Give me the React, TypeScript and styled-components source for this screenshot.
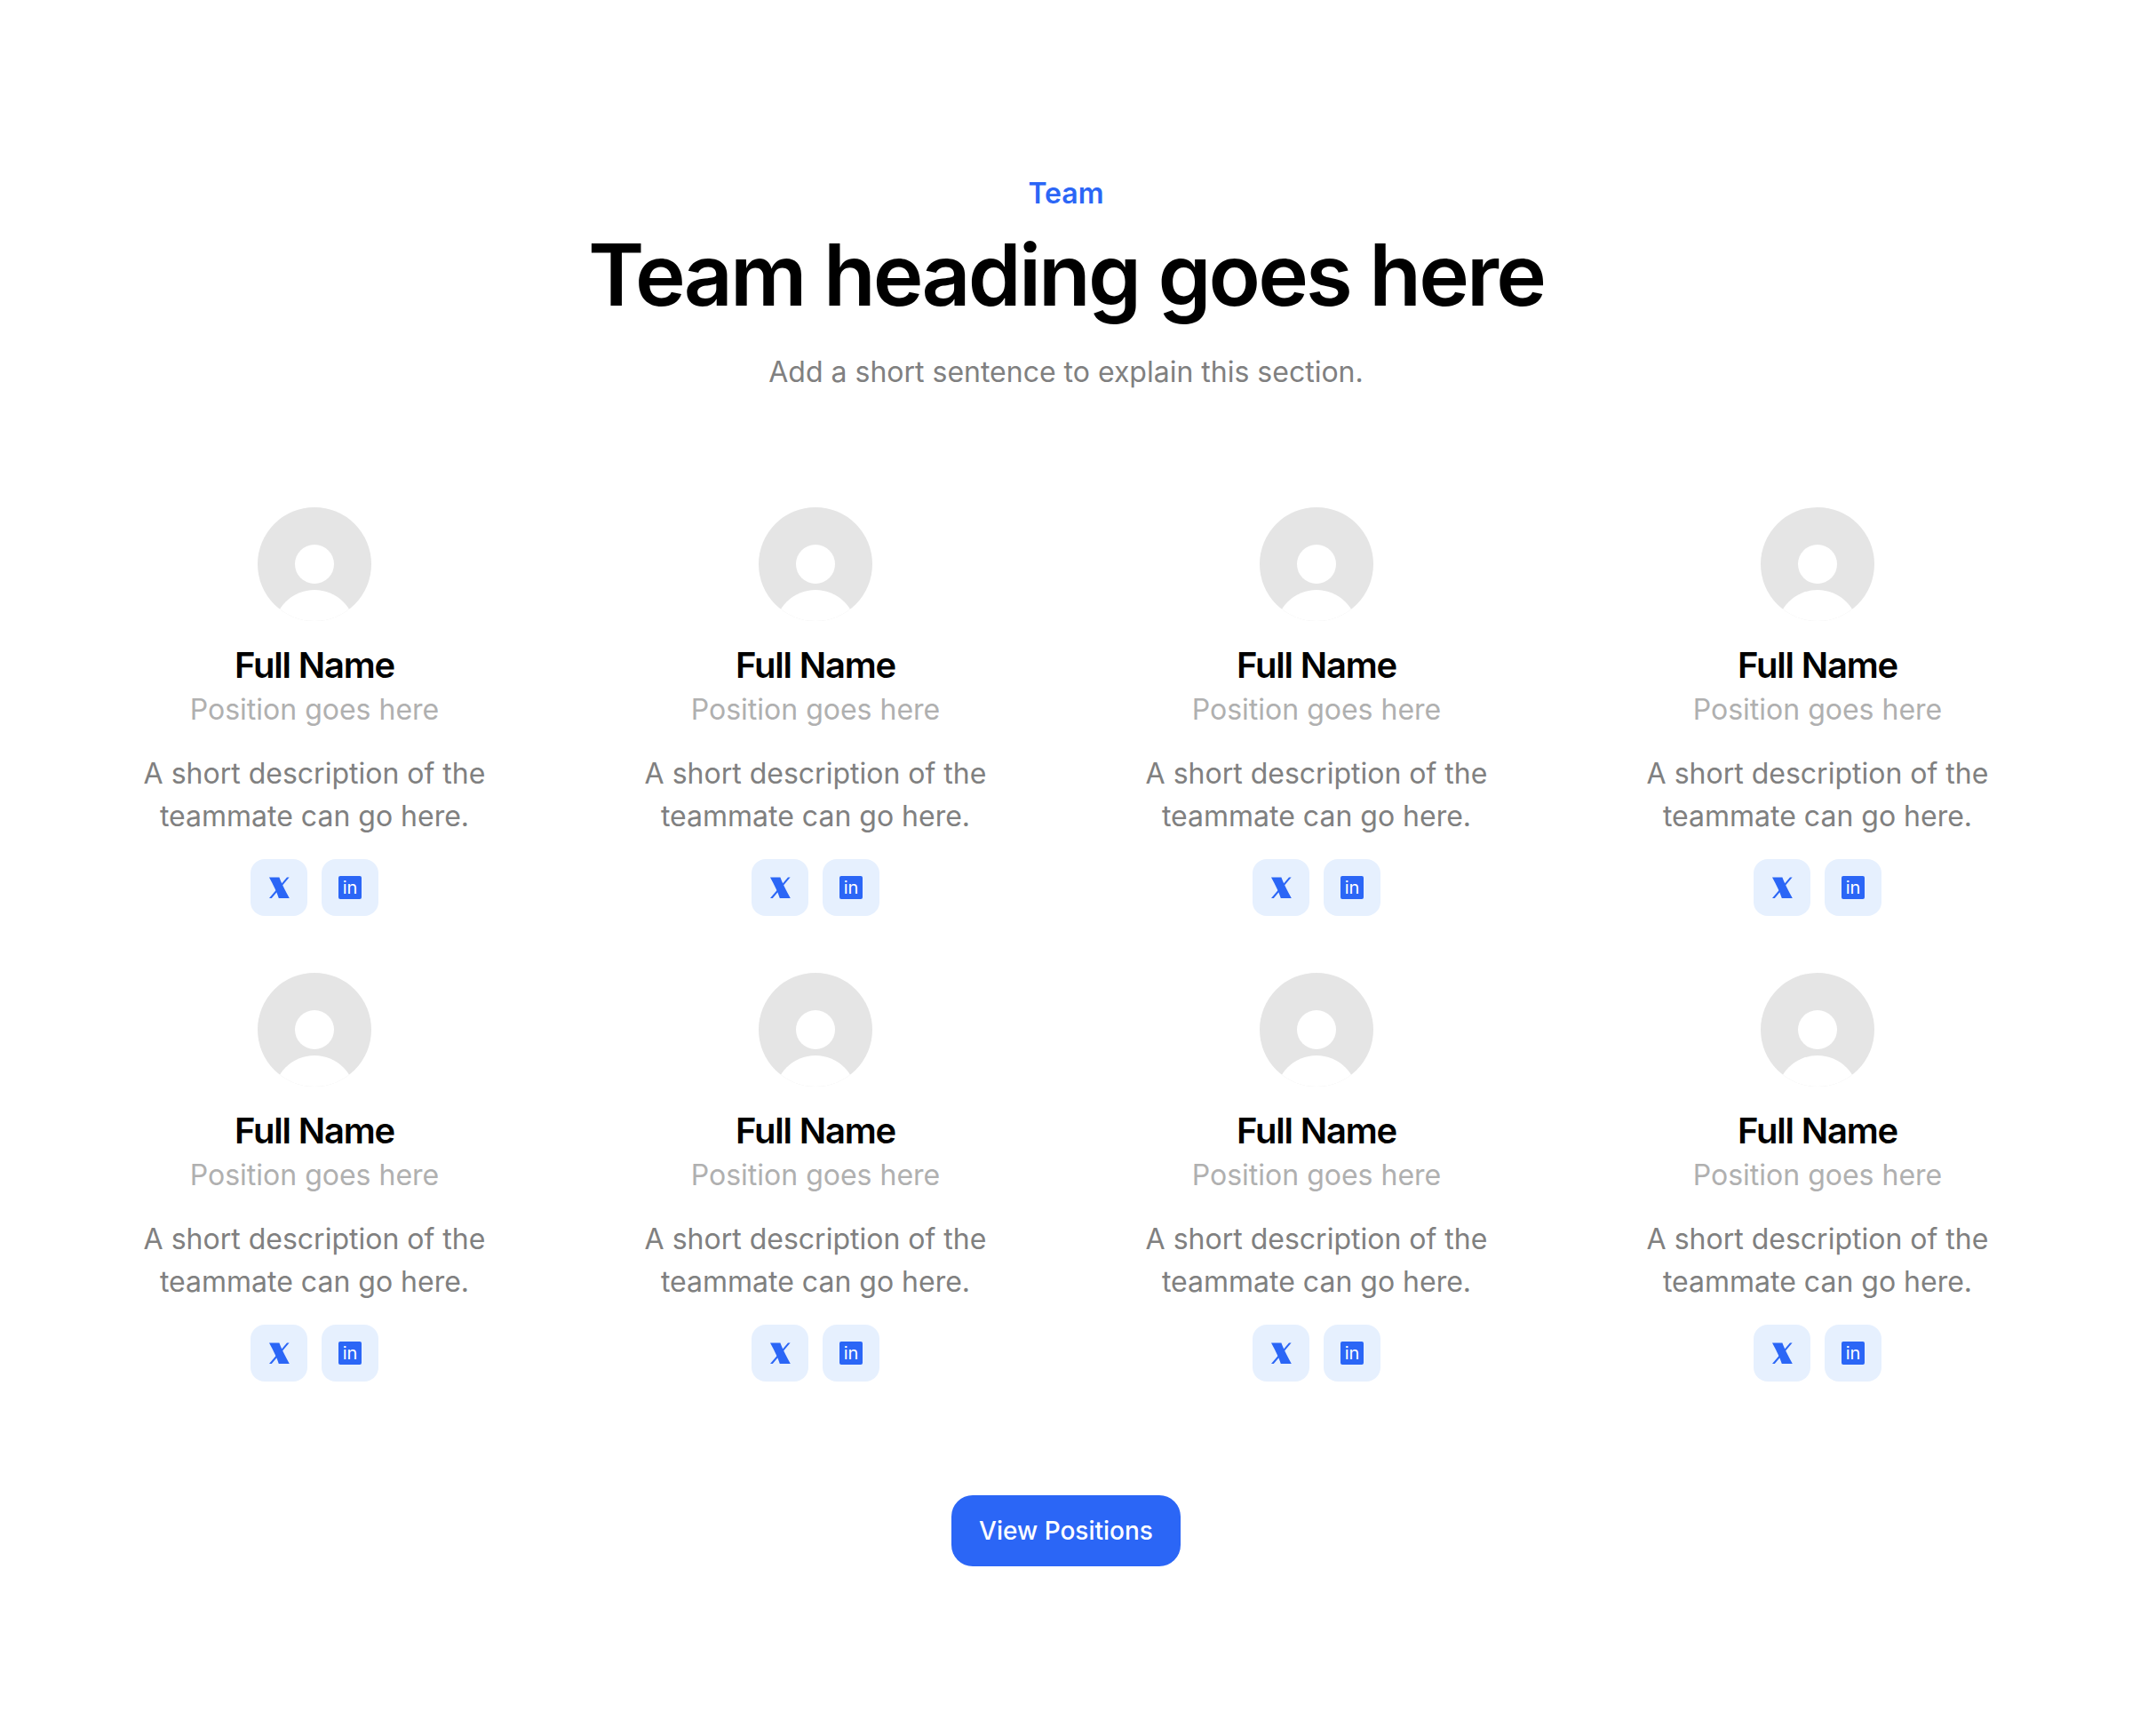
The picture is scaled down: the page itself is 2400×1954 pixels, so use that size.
import styled, { createGlobalStyle } from 'styled-components';

const GlobalStyle = createGlobalStyle`
  * {
    box-sizing: border-box;
  }

  body {
    margin: 0;
    background-color: #ffffff;
    font-family: Inter, "Liberation Sans", sans-serif;
  }
`;

const Section = styled.section`
  display: flex;
  flex-direction: column;
  align-items: center;
  min-height: 1954px;
  padding: 194px 96px 0;
`;

const Header = styled.header`
  display: flex;
  flex-direction: column;
  align-items: center;
  margin-bottom: 128px;
`;

const Eyebrow = styled.span`
  font-size: 32px;
  line-height: 48px;
  font-weight: 600;
  color: #2b66f6;
  margin-bottom: 11px;
`;

const Heading = styled.h2`
  margin: 0 0 30px;
  font-size: 96px;
  line-height: 112px;
  font-weight: 600;
  letter-spacing: -0.03em;
  color: #000000;
`;

const Subheading = styled.p`
  margin: 0;
  font-size: 32px;
  line-height: 48px;
  color: #808080;
`;

const Grid = styled.div`
  display: grid;
  grid-template-columns: repeat(4, 516px);
  gap: 64px 48px;
  margin-bottom: 128px;
`;

const Card = styled.article`
  display: flex;
  flex-direction: column;
  align-items: center;
  text-align: center;
`;

const AvatarIcon = styled.svg`
  display: block;
  width: 128px;
  height: 128px;
  margin-bottom: 23px;
`;

const Name = styled.h3`
  margin: 0;
  font-size: 40px;
  line-height: 53px;
  font-weight: 600;
  letter-spacing: -0.03em;
  color: #000000;
`;

const Position = styled.p`
  margin: 0 0 24px;
  font-size: 32px;
  line-height: 48px;
  color: #b0b0b0;
`;

const Description = styled.p`
  margin: 0 0 24px;
  font-size: 32px;
  line-height: 48px;
  color: #808080;
`;

const Socials = styled.div`
  display: flex;
  gap: 16px;
`;

const SocialLink = styled.a`
  display: flex;
  align-items: center;
  justify-content: center;
  width: 64px;
  height: 64px;
  border-radius: 16px;
  background-color: #e6f0fe;
`;

const SocialIcon = styled.svg`
  display: block;
  width: ${(props) => props.width}px;
  height: ${(props) => props.height}px;
`;

const Button = styled.button`
  width: 258px;
  height: 80px;
  border: none;
  border-radius: 24px;
  background-color: #2b66f6;
  color: #ffffff;
  font-family: inherit;
  font-size: 28px;
  font-weight: 500;
`;

const Avatar = () => (
  <AvatarIcon viewBox="0 0 128 128">
    <defs>
      <clipPath id="avatar-clip">
        <circle cx="64" cy="64" r="64" />
      </clipPath>
    </defs>
    <g clipPath="url(#avatar-clip)">
      <rect width="128" height="128" fill="#e5e5e5" />
      <circle cx="64" cy="64" r="22" fill="#ffffff" />
      <circle cx="64" cy="139" r="46" fill="#ffffff" />
    </g>
  </AvatarIcon>
);

const XIcon = () => (
  <SocialIcon width={23} height={24} viewBox="0 0 23 24">
    <path d="M0 0.5H11.4Q14 8 22.8 24H10.8Q8 15 0 0.5Z" fill="#2b66f6" />
    <path d="M20 0.5H22.6L2.8 24H0Z" fill="#2b66f6" />
  </SocialIcon>
);

const LinkedinIcon = () => (
  <SocialIcon width={26} height={26} viewBox="0 0 26 26">
    <rect width="26" height="26" rx="2" fill="#2b66f6" />
    <text x="13" y="20" textAnchor="middle" fontSize="20" fontWeight="400" fill="#ffffff">
      in
    </text>
  </SocialIcon>
);

const TeamCard = () => (
  <Card>
    <Avatar />
    <Name>Full Name</Name>
    <Position>Position goes here</Position>
    <Description>
      A short description of the
      <br />
      teammate can go here.
    </Description>
    <Socials>
      <SocialLink>
        <XIcon />
      </SocialLink>
      <SocialLink>
        <LinkedinIcon />
      </SocialLink>
    </Socials>
  </Card>
);

const members = [1, 2, 3, 4, 5, 6, 7, 8];

const App = () => {
  return (
    <>
      <GlobalStyle />
      <Section>
        <Header>
          <Eyebrow>Team</Eyebrow>
          <Heading>Team heading goes here</Heading>
          <Subheading>Add a short sentence to explain this section.</Subheading>
        </Header>
        <Grid>
          {members.map((id) => (
            <TeamCard key={id} />
          ))}
        </Grid>
        <Button>View Positions</Button>
      </Section>
    </>
  );
};

export default App;
